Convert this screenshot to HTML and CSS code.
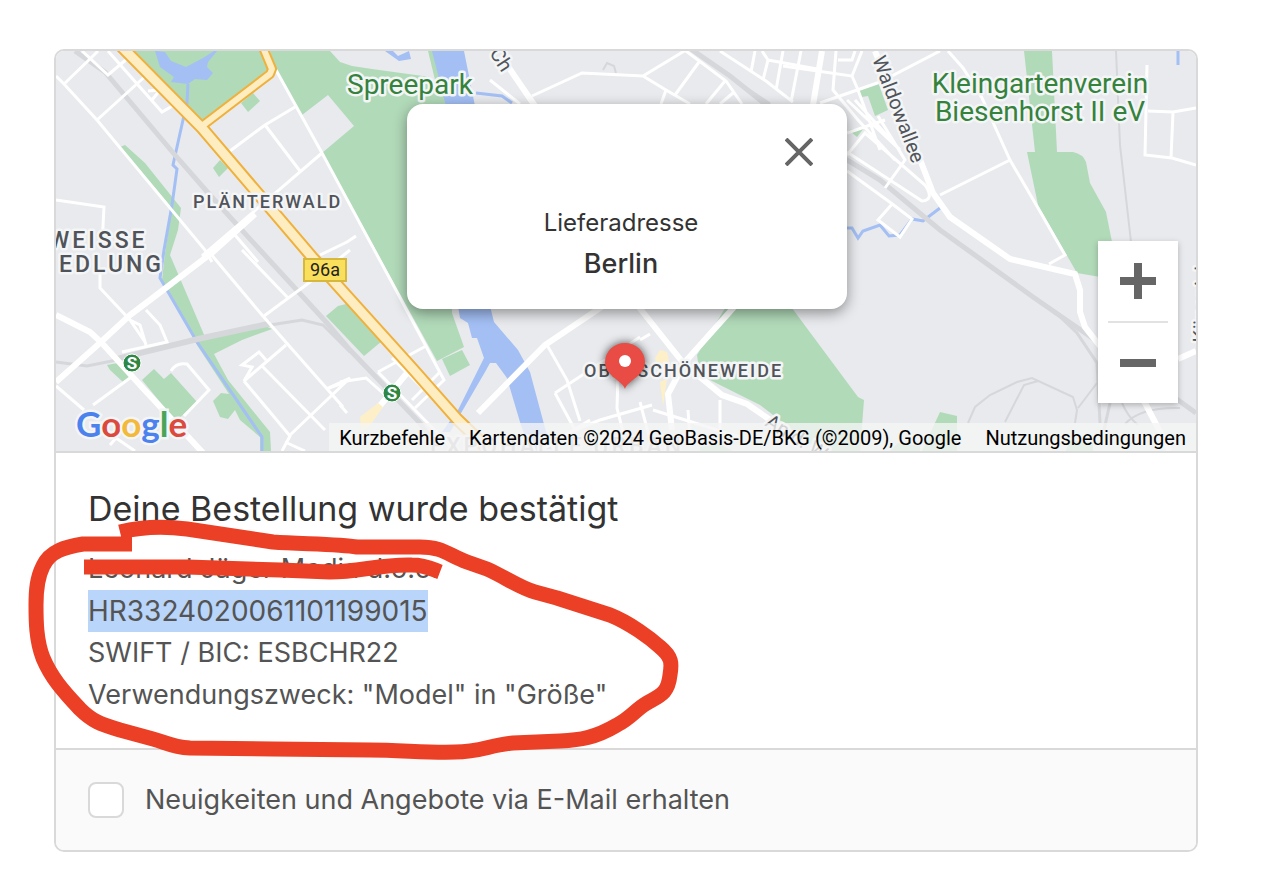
FILE: index.html
```html
<!DOCTYPE html>
<html lang="de">
<head>
<meta charset="utf-8">
<meta name="viewport" content="width=device-width, initial-scale=1">
<title>Bestellbestätigung</title>
<link rel="stylesheet" href="styles.css">
</head>
<body>
<main class="page">
  <section class="card">
    <div class="map">
      <svg class="map-canvas" viewBox="56 51 1140 400" preserveAspectRatio="xMidYMid slice" role="img" aria-label="Karte von Berlin">
        <g class="park">
          <path d="M130 51H262L270 68L202 123Z"/>
          <path d="M270 51H330L340 62L352 66L372 69L430 77L450 110L452 313L464 347L437 361L322 153L354 126L328 95L302 115L276 70Z"/>
          <path d="M428 51h6l14 45-4 8-8-20z"/>
          <path d="M442 359L462 350L470 365L450 376Z"/>
          <path d="M730 300H786L858 397L864 400L860 451H820L760 405L700 375L697 355Z"/>
          <path d="M1024 51H1052L1057 152H1073Q1083 154 1086 162L1090 183L1106 212L1112 242V279L1077 273L1038 205L1027 152H1035Z"/>
          <path d="M858 90L878 82L888 110L875 116L868 96L862 97ZM849 130L864 128L857 137Z"/>
          <path d="M940 412L957 416V451H922ZM1070 440L1093 443V451H1066ZM700 447l20-3 12 7h-32zM890 451l8-8 22 3v5z"/>
          <path d="M241 103L253 93L260 101L248 112ZM213 168L220 160L228 168L219 177Z"/>
          <path d="M120 147L125 145L145 163L181 208L178 230L170 255L205 337L263 325L272 329L242 340L214 354L228 380L270 432L271 451H260L260 437L240 420L235 410L228 419L220 417L213 401L221 393L229 394L197 345L162 280L165 253L172 208Z"/>
          <path d="M107 365L118 363L131 376L123 382L110 370ZM142 380L154 369L164 379L171 373L197 402L176 421L165 408Z"/>
          <path d="M326 316L338 306L350 303L382 341L364 356Z"/>
        </g>
        <g class="water">
          <path d="M155 51L165 52L171 61L186 67L203 58L214 51H217L208 62L207 67L213 73L207 80L195 79L188 84L171 82L174 77L160 67Z"/>
          <path d="M432 51H464L475 106H446ZM458 306H490L494 322L518 350L530 372L545 428L552 451H530L520 422L507 378L496 363H490L485 372L450 432H442L458 410L484 358L477 338H472L468 323L460 318ZM385 51L399 61 411 59 409 51 398 56 393 51Z"/>
        </g>
        <g class="creek">
          <path d="M188 84L187 103L183 120L173 165L177 169L172 205L164 250L160 278L197 342L262 437V451"/>
          <path d="M476 93L502 96L512 103M847 228H852L858 238L863 231L880 225L889 236L900 235L912 219L923 221L940 208M1178 51V65"/>
        </g>
        <g class="rail">
          <path class="rail-wide" d="M75 51L105 72L175 155L210 195L260 250L327 323L350 350L420 423L440 451"/>
          <path class="rail-wide" d="M688 47L730 76L765 104L847 160L880 180L940 230L1033 297L1098 342L1178 400L1196 413"/>
          <path class="rail-mid" d="M56 362L87 366L117 360L200 340L270 325L302 320L323 325L350 352M115 358L200 337L270 322M740 84L770 104"/>
          <path class="rail-mid" d="M1053 310L1077 333L1097 363L1100 423M1110 403L1104 430"/>
          <path d="M968 423L975 407L990 395L1017 382L1032 378L1073 397L1077 410L1075 423M1038 381L1024 385L1005 422M1078 408L1097 383M1122 403Q1128 417 1138 425M1125 424Q1140 407 1180 408M1116 51L1120 145L1131 242M603 70L607 63L614 66L616 73"/>
        </g>
        <g class="lane">
          <path d="M56 76L64 84L97 120L205 250L212 262M64 84L92 57L98 51M97 120L150 72M82 51L108 75L128 58M108 51L162 112L174 105M152 100L160 90L148 91"/>
          <path d="M276 70L322 153L397 292L444 380L415 408M230 151L265 125L295 107M265 125L300 171M322 153L202 256M235 235L258 262M320 255L347 242L356 236"/>
          <path d="M56 200L104 207L102 245M100 270V288L130 320L145 342M130 320L140 325L146 345M146 310L160 325L167 342L122 352M56 386L84 410M93 405L130 378M110 445L116 438L135 451"/>
          <path d="M210 253L262 315L343 407M242 250L288 298M264 316L310 282L350 250M286 345L244 381L252 367L242 365L259 352L266 360M244 381L290 436L282 451M262 366L325 430M289 436L350 378L326 389L343 383M171 371Q176 362 187 364L209 390L184 416M285 442L305 451"/>
          <path d="M340 382L366 378L385 395M378 372L426 346M378 372L450 446M392 358L460 425M440 372L412 400M340 405L347 413"/>
          <path d="M547 345L567 380L580 421M555 393L590 370L640 337M555 393L575 430L600 420L652 405M618 375L617 408L625 440M540 451L590 420M653 410L740 437M640 402L650 440M688 410L690 440M720 400V430M640 340L650 334"/>
          <path d="M783 66L852 76L858 90L880 150M836 51L833 90L858 120L895 160M838 60H852L855 51M852 76L862 51M820 103L880 82L940 51M847 133L885 120M878 116L905 160L885 188M847 155L865 133L925 185Q935 200 922 201L847 152M847 171L891 203L912 219L900 237L878 220L893 203M940 195L1010 160M948 51L963 68L982 98L1010 160L1038 208L1065 255L1049 264M847 100L900 150L855 100"/>
          <path d="M1147 65L1145 155L1172 158L1196 165M1148 111L1173 112L1196 108M1173 112L1171 158M490 80L520 104"/>
          <path d="M532 96L582 73L643 76L686 50M643 76L666 90L690 104M686 51L726 81L742 104M666 90L661 104M699 62L675 95M725 81L706 104M733 93L720 104M720 51L766 81L793 102M755 51L751 72M762 51L768 60L763 80M768 60L817 69M783 51L776 90M801 51L791 102"/>
        </g>
        <g class="street">
          <path d="M56 315L90 332L101 342L140 385L205 455M56 382L101 342L130 315L150 300L213 252L255 214"/>
          <path d="M478 413L545 345L603 306M507 65L535 106M875 51L921 162L933 193L950 217L1010 259L1075 274L1080 290V312L1085 327L1145 403L1170 451M1178 359L1196 351M822 51L813 105"/>
          <path d="M638 306L665 340L684 364L722 395L747 404L776 424M735 306L685 362L668 394L672 430M364 425L412 367"/>
        </g>
        <path class="plaza" d="M655 358L660 350 667 352 670 366 660 380zM660 382l7-3-4 27zM360 417l18-14 5 4-14 20-8 4z"/>
        <g class="main-road-edge">
          <path d="M262 45L272 69L270 74L202 126"/>
          <path class="wide" d="M120 45L202 128L312 257L347 296L412 368L457 419L490 451"/>
        </g>
        <g class="main-road">
          <path d="M262 45L272 69L270 74L202 126"/>
          <path class="wide" d="M120 45L202 128L312 257L347 296L412 368L457 419L490 451"/>
        </g>
        <g class="label">
          <text class="district" x="193" y="208">PLÄNTERWALD</text>
          <text class="district large" x="49" y="248">WEISSE</text>
          <text class="district large" x="59" y="272">EDLUNG</text>
          <text class="district" x="584" y="377">OBERSCHÖNEWEIDE</text>
          <text class="district large faded" x="430" y="454">EXPOHALLE URBAN</text>
          <text class="green-name" x="347" y="94">Spreepark</text>
          <text class="green-name" x="1040" y="93" text-anchor="middle">Kleingartenverein</text>
          <text class="green-name" x="1040" y="121" text-anchor="middle">Biesenhorst II eV</text>
          <text class="street-name" transform="translate(872 59) rotate(69)">Waldowallee</text>
          <text class="street-name" transform="translate(489 53) rotate(57)">Ch</text>
          <text class="street-name" transform="translate(764 425) rotate(32)">An d. Wuhlh.</text>
          <text class="street-name" transform="translate(1207 343) rotate(-88)">Köpenick</text>
        </g>
        <g class="shield">
          <rect x="304" y="259" width="42" height="22"/>
          <text x="325" y="276" text-anchor="middle">96a</text>
        </g>
        <g class="station">
          <circle cx="132" cy="363" r="9"/>
          <text x="132" y="369" text-anchor="middle">S</text>
          <circle cx="392" cy="393" r="9"/>
          <text x="392" y="399" text-anchor="middle">S</text>
        </g>
      </svg>

      <a class="google" href="#" aria-label="Google"><span class="g-blue">G</span><span class="g-red">o</span><span class="g-yellow">o</span><span class="g-blue">g</span><span class="g-green">l</span><span class="g-red">e</span></a>

      <svg class="pin" viewBox="0 0 40 46" aria-hidden="true">
        <path d="M20 46C17 37 0 33 0 19A20 19 0 0 1 40 19C40 33 23 37 20 46Z"/>
        <circle cx="20" cy="18" r="6"/>
      </svg>

      <div class="popup" role="dialog" aria-label="Lieferadresse">
        <button class="popup-close" type="button" aria-label="Schließen">
          <svg viewBox="0 0 28 28" aria-hidden="true"><path d="M1 1L27 27M27 1L1 27"/></svg>
        </button>
        <p class="popup-label">Lieferadresse</p>
        <p class="popup-city">Berlin</p>
      </div>

      <div class="zoom">
        <button type="button" aria-label="Vergrößern"><svg viewBox="0 0 36 36" aria-hidden="true"><path d="M0 18H36M18 0V36"/></svg></button>
        <button type="button" aria-label="Verkleinern"><svg viewBox="0 0 36 36" aria-hidden="true"><path d="M0 18H36"/></svg></button>
      </div>

      <div class="attribution">
        <button type="button">Kurzbefehle</button>
        <span>Kartendaten ©2024 GeoBasis-DE/BKG (©2009), Google</span>
        <a href="#">Nutzungsbedingungen</a>
      </div>
    </div>

    <div class="order">
      <h1>Deine Bestellung wurde bestätigt</h1>
      <p>Leonard Jäger Media d.o.o.<br><mark>HR3324020061101199015</mark><br>SWIFT / BIC: ESBCHR22<br>Verwendungszweck: "Model" in "Größe"</p>
    </div>

    <div class="newsletter">
      <input type="checkbox" id="news">
      <label for="news">Neuigkeiten und Angebote via E-Mail erhalten</label>
    </div>

    <svg class="marker" viewBox="20 510 670 260" aria-hidden="true">
      <path d="M120 532C140 527 165 526 187 529L273 542C300 544 340 544 357 547H420C443 547 448 555 467 562L487 569C505 577 520 588 535 592L557 598L610 615C630 623 650 638 660 647C672 657 672 663 670 675C668 693 661 695 647 703C635 710 632 717 617 725C595 738 580 740 560 741L513 743C490 745 480 752 455 752C430 753 400 750 370 750L273 749L190 748C172 747 165 742 153 739L120 730C100 724 92 721 80 709C62 690 51 677 43 658C36 640 36 620 36 605C36 590 37 578 43 566C50 551 65 547 83 544H132"/>
      <path d="M84 567H187L280 570L330 572C360 572 380 564 412 565C425 565 432 569 440 572"/>
    </svg>
  </section>
</main>
</body>
</html>
```
FILE: styles.css
```css
* {
  box-sizing: border-box;
}

body {
  margin: 0;
  background: #fff;
  color: #545454;
  font-family: Inter, "Liberation Sans", sans-serif;
}

button {
  padding: 0;
  border: 0;
  background: none;
  font: inherit;
  color: inherit;
  cursor: pointer;
}

.page {
  padding: 49px 70px 20px 54px;
}

.card {
  position: relative;
  border: 2px solid #d9d9d9;
  border-radius: 10px;
}

/* Map */

.map {
  position: relative;
  height: 402px;
  overflow: hidden;
  border-bottom: 2px solid #d9d9d9;
  border-radius: 8px 8px 0 0;
  background: #e8eaed;
  font-family: Roboto, "Liberation Sans", sans-serif;
}

.map-canvas {
  display: block;
  width: 100%;
  height: 400px;
}

.park { fill: #b1dab9; }
.water { fill: #a3bff4; }
.creek { fill: none; stroke: #a3bff4; stroke-width: 3; }
.rail { fill: none; stroke: #d5d7da; stroke-width: 2; }
.rail-mid { stroke-width: 3; }
.rail-wide { stroke-width: 5; }
.lane { fill: none; stroke: #fff; stroke-width: 3; }
.street { fill: none; stroke: #fff; stroke-width: 6; }
.plaza { fill: #fdf0c8; }
.main-road-edge { fill: none; stroke: #f0b03c; stroke-width: 10; stroke-linejoin: round; }
.main-road-edge .wide { stroke-width: 13; }
.main-road { fill: none; stroke: #fdedc0; stroke-width: 6; stroke-linejoin: round; }
.main-road .wide { stroke-width: 9; }

.label {
  fill: #50545a;
  stroke: #f4f5f6;
  stroke-width: 5;
  stroke-linejoin: round;
  paint-order: stroke;
}

.district { font-size: 18px; font-weight: 500; letter-spacing: 2px; }
.district.large { font-size: 23px; letter-spacing: 3px; }
.district.faded { fill: #b5b7ba; }
.green-name { font-size: 28px; fill: #35823d; }
.street-name { font-size: 20px; }

.shield rect { fill: #fadf5d; stroke: #d5b83d; stroke-width: 2; }
.shield text { font-size: 18px; fill: #222; }
.station circle { fill: #2f8746; stroke: #fff; stroke-width: 1; }
.station text { font-size: 17px; font-weight: 700; fill: #fff; }

.google {
  position: absolute;
  left: 20px;
  bottom: 6px;
  font: 35px/44px Lato, sans-serif;
  font-weight: 700;
  text-decoration: none;
  -webkit-text-stroke: 5px #f4f5f6;
  paint-order: stroke fill;
}

.g-blue { color: #4c82ee; }
.g-red { color: #db4a3c; }
.g-yellow { color: #f3b93a; }
.g-green { color: #4aa559; }

.pin {
  position: absolute;
  left: calc(50% - 21px);
  top: 292px;
  width: 40px;
  height: 46px;
  overflow: visible;
  filter: drop-shadow(0 0 5px rgba(0, 0, 0, .7));
}

.pin path { fill: #e94b45; }
.pin circle { fill: #fff; }

.popup {
  position: absolute;
  left: calc(50% - 219px);
  top: 53px;
  width: 440px;
  padding: 98px 12px 24px 0;
  border-radius: 16px;
  background: #fff;
  box-shadow: 0 4px 14px rgba(0, 0, 0, .4);
  color: #333;
  font-family: Inter, "Liberation Sans", sans-serif;
  text-align: center;
}

.popup p { margin: 0; }
.popup-label { font-size: 24px; line-height: 41px; }
.popup-city { font-size: 27px; line-height: 42px; font-weight: 500; }

.popup-close {
  position: absolute;
  top: 34px;
  right: 34px;
  width: 28px;
  height: 28px;
}

.popup-close svg { display: block; }
.popup-close path { stroke: #666; stroke-width: 4; }

.zoom {
  position: absolute;
  top: 190px;
  right: 18px;
  width: 80px;
  padding: 0 10px;
  background: #fff;
  box-shadow: 0 2px 6px rgba(0, 0, 0, .25);
}

.zoom button {
  box-sizing: content-box;
  display: grid;
  place-items: center;
  width: 100%;
  height: 80px;
}

.zoom button + button { border-top: 2px solid #e2e2e2; }
.zoom svg { width: 36px; height: 36px; }
.zoom path { stroke: #666; stroke-width: 8; }

.attribution {
  position: absolute;
  right: 0;
  bottom: 0;
  display: flex;
  gap: 24px;
  padding: 2px 10px 0;
  background: rgba(245, 245, 245, .78);
  color: #000;
  font-size: 20px;
  line-height: 26px;
  white-space: nowrap;
}

.attribution a { color: inherit; text-decoration: none; }

/* Order details */

.order {
  padding: 33px 32px 32px;
}

.order h1 {
  margin: 0 0 16px;
  color: #333;
  font-size: 34px;
  font-weight: 400;
  line-height: 46px;
}

.order p {
  margin: 0;
  font-size: 27px;
  line-height: 42px;
}

.order mark {
  display: inline-block;
  background: #b9d5fa;
  color: inherit;
  font-size: 28px;
  vertical-align: top;
}

.newsletter {
  display: flex;
  align-items: center;
  gap: 21px;
  padding: 29px 32px;
  border-top: 2px solid #d9d9d9;
  border-radius: 0 0 8px 8px;
  background: #fafafa;
  font-size: 27px;
  line-height: 42px;
}

.newsletter input {
  width: 36px;
  height: 36px;
  margin: 0;
  appearance: none;
  border: 2px solid #d9d9d9;
  border-radius: 8px;
  background: #fff;
}

/* Hand-drawn highlight over the card */

.marker {
  position: absolute;
  left: -36px;
  top: 459px;
  width: 670px;
  height: 260px;
  fill: none;
  stroke: #eb4026;
  stroke-width: 15;
  stroke-linejoin: round;
  pointer-events: none;
}
```
